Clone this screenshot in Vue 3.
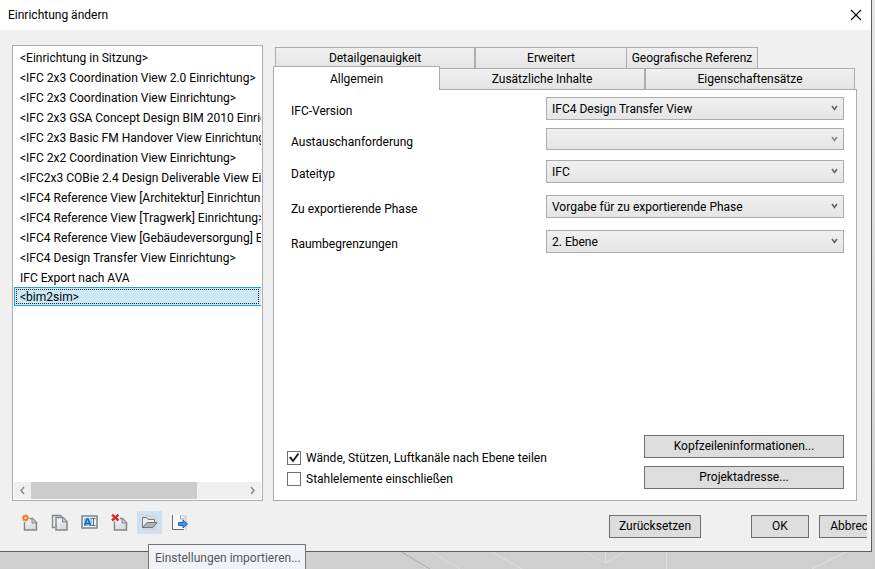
<script setup>
import { ref } from 'vue'

const setups = [
  '<Einrichtung in Sitzung>',
  '<IFC 2x3 Coordination View 2.0 Einrichtung>',
  '<IFC 2x3 Coordination View Einrichtung>',
  '<IFC 2x3 GSA Concept Design BIM 2010 Einrichtung>',
  '<IFC 2x3 Basic FM Handover View Einrichtung>',
  '<IFC 2x2 Coordination View Einrichtung>',
  '<IFC2x3 COBie 2.4 Design Deliverable View Einrichtung>',
  '<IFC4 Reference View [Architektur] Einrichtung>',
  '<IFC4 Reference View [Tragwerk] Einrichtung>',
  '<IFC4 Reference View [Gebäudeversorgung] Einrichtung>',
  '<IFC4 Design Transfer View Einrichtung>',
  'IFC Export nach AVA',
  '<bim2sim>',
]
const selected = ref(12)

const fields = [
  { id: 'version', label: 'IFC-Version', value: 'IFC4 Design Transfer View' },
  { id: 'exchange', label: 'Austauschanforderung', value: '', disabled: true },
  { id: 'filetype', label: 'Dateityp', value: 'IFC' },
  { id: 'phase', label: 'Zu exportierende Phase', value: 'Vorgabe für zu exportierende Phase' },
  { id: 'space', label: 'Raumbegrenzungen', value: '2. Ebene' },
]
const splitByLevel = ref(true)
const includeSteel = ref(false)
</script>

<template>
  <div class="desktop">
    <svg class="scene" width="475" height="17" viewBox="400 552 475 17" aria-hidden="true">
      <path d="M400 551 430 569" stroke="#a8a8a8" />
      <path d="M430 551 460 569" stroke="#e2e2e2" stroke-dasharray="2 1" />
      <path d="M490 551 522 569M812 569 848 551M666.500 551V569M605.500 551V563" stroke="#e0e0e0" />
      <path d="M583 551 605 563 627 551" stroke="#e4e4e4" stroke-dasharray="2 1" />
    </svg>
    <main class="dialog">
      <header class="titlebar">
        <h1>Einrichtung ändern</h1>
        <button class="close" type="button" aria-label="Schließen">
          <svg width="12" height="12" viewBox="0 0 12 12"><path d="M1 1 11 11M11 1 1 11" stroke="#000" stroke-width="1.200" /></svg>
        </button>
      </header>

      <div class="content">
        <section class="listbox">
          <ul role="listbox" aria-label="Einrichtungen">
            <li
              v-for="(name, i) in setups"
              :key="name"
              role="option"
              :aria-selected="i === selected"
              :class="{ selected: i === selected }"
              @click="selected = i"
            >{{ name }}</li>
          </ul>
          <div class="scrollbar">
            <button type="button" aria-label="Nach links">
              <svg width="7" height="9" viewBox="0 0 7 9"><path d="M5 1 2 4.500 5 8" /></svg>
            </button>
            <div class="track"><div class="thumb"></div></div>
            <button type="button" aria-label="Nach rechts">
              <svg width="7" height="9" viewBox="0 0 7 9"><path d="M2 1 5 4.500 2 8" /></svg>
            </button>
          </div>
        </section>

        <section class="settings">
          <div class="tabs" role="tablist">
            <div class="tab-row back">
              <button class="tab" type="button" role="tab">Detailgenauigkeit</button>
              <button class="tab" type="button" role="tab">Erweitert</button>
              <button class="tab joined" type="button" role="tab">Geografische Referenz</button>
            </div>
            <div class="tab-row front">
              <button class="tab active" type="button" role="tab" aria-selected="true">Allgemein</button>
              <button class="tab joined" type="button" role="tab">Zusätzliche Inhalte</button>
              <button class="tab" type="button" role="tab">Eigenschaftensätze</button>
            </div>
          </div>

          <div class="panel" role="tabpanel">
            <div class="form">
              <template v-for="f in fields" :key="f.id">
                <label :for="f.id">{{ f.label }}</label>
                <div class="combo" :class="{ disabled: f.disabled }">
                  <select :id="f.id" :disabled="f.disabled"><option>{{ f.value }}</option></select>
                  <svg width="7" height="6" viewBox="0 0 7 6" aria-hidden="true"><path d="M1 1 3.500 4.500 6 1" /></svg>
                </div>
              </template>
            </div>
            <div class="panel-foot">
              <div class="checks">
                <label><input v-model="splitByLevel" type="checkbox">Wände, Stützen, Luftkanäle nach Ebene teilen</label>
                <label><input v-model="includeSteel" type="checkbox">Stahlelemente einschließen</label>
              </div>
              <div class="extra">
                <button class="push" type="button">Kopfzeileninformationen...</button>
                <button class="push" type="button">Projektadresse...</button>
              </div>
            </div>
          </div>
        </section>
      </div>

      <footer class="footer">
        <svg width="0" height="0" class="defs" aria-hidden="true">
          <linearGradient id="paper" x2="0.600" y2="1">
            <stop offset="0" stop-color="#fcfcfd" />
            <stop offset="1" stop-color="#d3d7e0" />
          </linearGradient>
        </svg>
        <div class="tools">
          <button class="tool" type="button" aria-label="Neu">
            <svg width="17" height="17" viewBox="0 0 17 17">
              <path d="M3.500 4.500h8l4 4v7.500h-12z" fill="url(#paper)" stroke="#85868b" stroke-width="1.500" />
              <path d="M11 4.500V9h4.500" fill="#c9ccd1" stroke="#85868b" />
              <circle cx="4.500" cy="4" r="4.200" fill="#f0f0f0" />
              <path d="M4.500.500v7M1 4h7M2 1.500l5 5M7 1.500l-5 5" stroke="#ee8b3c" stroke-width="1.500" />
              <circle cx="4.500" cy="4" r="2" fill="#ffe9bd" stroke="#ea7325" stroke-width="1.500" />
            </svg>
          </button>
          <button class="tool" type="button" aria-label="Duplizieren">
            <svg width="17" height="17" viewBox="0 0 17 17">
              <path d="M4 13.500H1.500v-12h8l2 2" fill="#e9eaec" stroke="#85868b" stroke-width="1.300" />
              <path d="M5 3.500h7l4 4v8.500H5z" fill="url(#paper)" stroke="#85868b" stroke-width="1.500" />
              <path d="M11.500 3.500V8H16" fill="#c9ccd1" stroke="#85868b" />
            </svg>
          </button>
          <button class="tool" type="button" aria-label="Umbenennen">
            <svg width="17" height="17" viewBox="0 0 17 17">
              <rect x="1" y="2" width="15" height="12" fill="#eef3f7" stroke="#7c858c" stroke-width="1.500" />
              <rect x="3" y="4" width="8" height="8" fill="#8fcaf5" />
              <path d="M3.500 11.500 6 5h1l2.500 6.500M4.500 9.500h4" stroke="#1768b5" stroke-width="1.600" />
              <path d="M10.500 4.500h4M10.500 11.500h4M12.500 4.500v7" stroke="#61666b" />
            </svg>
          </button>
          <button class="tool" type="button" aria-label="Löschen">
            <svg width="17" height="17" viewBox="0 0 17 17">
              <path d="M3.500 4.500h8l4 4v7.500h-12z" fill="url(#paper)" stroke="#85868b" stroke-width="1.500" />
              <path d="M11 4.500V9h4.500" fill="#c9ccd1" stroke="#85868b" />
              <path d="M0 0h9v7.500H0z" fill="#f0f0f0" />
              <path d="M1 .700 7.500 6.500M7.500.700 1 6.500" stroke="#d02f32" stroke-width="2.400" />
            </svg>
          </button>
          <div class="tool-host">
            <button class="tool hot" type="button" aria-label="Importieren" aria-describedby="import-tip">
              <svg width="17" height="17" viewBox="0 0 17 17">
                <rect x="1" y="1" width="15" height="15" fill="#d3d8dd" />
                <path d="M1.500 13.500v-10h4l1.500 2h6.500v3" fill="#eceef0" stroke="#777b80" />
                <path d="M1.500 13.500 6 8.500h10l-4 5z" fill="#b0b4b8" stroke="#73777c" />
              </svg>
            </button>
            <div id="import-tip" class="tooltip" role="tooltip">Einstellungen importieren...</div>
          </div>
          <button class="tool" type="button" aria-label="Exportieren">
            <svg width="17" height="17" viewBox="0 0 17 17">
              <rect x="1" y="1" width="15" height="15" fill="#dadbde" />
              <path d="M2 1h8l4 4v10H2z" fill="#f8f8f9" />
              <path d="M1.500 1v14.500H13" stroke="#686c71" />
              <path d="M9.500 1v4h4" stroke="#a0a4a9" />
              <path d="M7.500 8.500h4.500V6l4.500 4-4.500 4v-2.500H7.500z" fill="#3b97ea" stroke="#1868b5" />
            </svg>
          </button>
        </div>
        <div class="actions">
          <button class="push reset" type="button">Zurücksetzen</button>
          <button class="push ok" type="button">OK</button>
          <div class="clip"><button class="push cancel" type="button">Abbrechen</button></div>
        </div>
      </footer>
    </main>
  </div>
</template>

<style>
body {
  margin: 0;
}
</style>

<style scoped>
* {
  box-sizing: border-box;
}

.desktop {
  position: relative;
  display: flex;
  min-height: 100vh;
  padding: 0 3px 17px 0;
  overflow: hidden;
  background: linear-gradient(#e6e6e6, #cfcfcf);
  font: 12px/18px Roboto, "Open Sans", sans-serif;
  color: #000;
}

button,
select {
  margin: 0;
  padding: 0;
  font: inherit;
  color: inherit;
}

svg {
  display: block;
  fill: none;
}

.scene,
.defs {
  position: absolute;
  right: 0;
  bottom: 0;
}

.dialog {
  position: relative;
  display: flex;
  flex: 1;
  flex-direction: column;
  min-width: 0;
  border: solid #5f5f5f;
  border-width: 0 1px 1px 0;
  background: #f0f0f0;
}

.titlebar {
  display: flex;
  align-items: center;
  justify-content: space-between;
  height: 30px;
  padding: 0 9px 0 8px;
  background: #fff;
}

.titlebar h1 {
  margin: 0;
  font-size: 12px;
  font-weight: 400;
}

.close {
  border: 0;
  background: none;
}

.content {
  display: grid;
  flex: 1;
  grid-template-columns: 251px minmax(0, 1fr);
  gap: 10px;
  padding: 15px 14px 0 12px;
}

.listbox {
  display: flex;
  flex-direction: column;
  justify-content: space-between;
  min-width: 0;
  padding: 1px;
  border: 1px solid #abadb3;
  background: #fff;
}

.listbox ul {
  margin: 0;
  padding: 0;
  overflow: hidden;
  list-style: none;
}

.listbox li {
  height: 20px;
  padding: 1px 6px 0;
  line-height: 20px;
  white-space: nowrap;
}

.listbox li.selected {
  height: 19px;
  padding: 0 5px;
  border: 1px solid #26a0da;
  border-right: 0;
  background: #cbe8f6;
  line-height: 18px;
  outline: 1px dotted #222;
  outline-offset: -3px;
}

.scrollbar {
  display: flex;
  height: 17px;
  background: #f0f0f0;
}

.scrollbar button {
  display: grid;
  place-items: center;
  width: 17px;
  border: 0;
  background: none;
}

.scrollbar path {
  stroke: #8a8a8a;
  stroke-width: 1.5;
}

.track {
  flex: 1;
}

.thumb {
  width: 78%;
  height: 100%;
  background: #cdcdcd;
}

.settings {
  display: flex;
  flex-direction: column;
  min-width: 0;
  padding-top: 2px;
}

.tab-row {
  display: grid;
  height: 21px;
}

.tab-row.back {
  grid-template-columns: 200fr 152fr 131fr 97fr;
  padding: 0 2px;
}

.tab-row.front {
  grid-template-columns: 167fr 205fr 210fr;
  padding-right: 2px;
}

.tab {
  border: 1px solid #acacac;
  border-bottom: 0;
  background: linear-gradient(#f0f0f0, #e5e5e5);
  white-space: nowrap;
}

.tab.joined {
  border-left: 0;
}

.tab.active {
  z-index: 1;
  margin: -2px 0 -1px;
  background: #fff;
}

.panel {
  display: flex;
  flex: 1;
  flex-direction: column;
  justify-content: space-between;
  padding: 7px 12px 11px;
  border: 1px solid #acacac;
  background: #fff;
}

.form {
  display: grid;
  grid-template-columns: 255px minmax(0, 1fr);
  grid-template-rows: 31px 32px 35px 35px 35px;
  align-items: start;
  padding-left: 5px;
}

.form label {
  padding-top: 5px;
}

.combo {
  position: relative;
  height: 23px;
}

.combo.disabled {
  height: 22px;
}

.combo select {
  display: block;
  width: 100%;
  height: 100%;
  padding: 0 20px 0 5px;
  border: 1px solid #acacac;
  border-radius: 0;
  appearance: none;
  background: linear-gradient(#f0f0f0, #e5e5e5);
  opacity: 1;
}

.combo svg {
  position: absolute;
  top: 8px;
  right: 6px;
  pointer-events: none;
}

.combo path {
  stroke: #606060;
  stroke-width: 1.5;
}

.combo.disabled path {
  stroke: #858585;
}

.panel-foot {
  display: flex;
  align-items: flex-end;
  justify-content: space-between;
}

.checks label {
  display: flex;
  align-items: center;
  gap: 5px;
  height: 21px;
}

.checks input {
  width: 14px;
  height: 14px;
  margin: 0 0 0 1px;
  border: 1px solid #707070;
  appearance: none;
  background: #fff;
}

.checks input:checked::before {
  display: block;
  width: 12px;
  height: 12px;
  background: #212121;
  clip-path: polygon(1px 6px, 3px 5px, 5px 8px, 10px 1px, 11px 3px, 5px 11px);
  content: "";
}

.extra {
  display: grid;
  gap: 8px;
  width: 200px;
}

.push {
  height: 23px;
  border: 1px solid #707070;
  background: #ddd;
  line-height: 21px;
}

.footer {
  display: flex;
  align-items: flex-start;
  justify-content: space-between;
  height: 50px;
  padding: 10px 4px 0 17px;
}

.tools {
  display: flex;
  gap: 5px;
}

.tool {
  display: grid;
  place-items: center;
  width: 25px;
  height: 23px;
  border: 0;
  background: none;
}

.tool.hot {
  background: #cde1f3;
}

.tool-host {
  position: relative;
}

.tooltip {
  position: absolute;
  top: 33px;
  left: 11px;
  width: 158px;
  height: 28px;
  padding: 4px 6px;
  border: 1px solid #767676;
  background: #f1f2f7;
  color: #575757;
  white-space: nowrap;
}

.actions {
  display: flex;
  padding-top: 4px;
}

.reset {
  width: 92px;
  margin-right: 50px;
}

.ok {
  width: 58px;
  margin-right: 10px;
}

.clip {
  width: 48px;
  overflow: hidden;
}

.cancel {
  width: 80px;
}
</style>
